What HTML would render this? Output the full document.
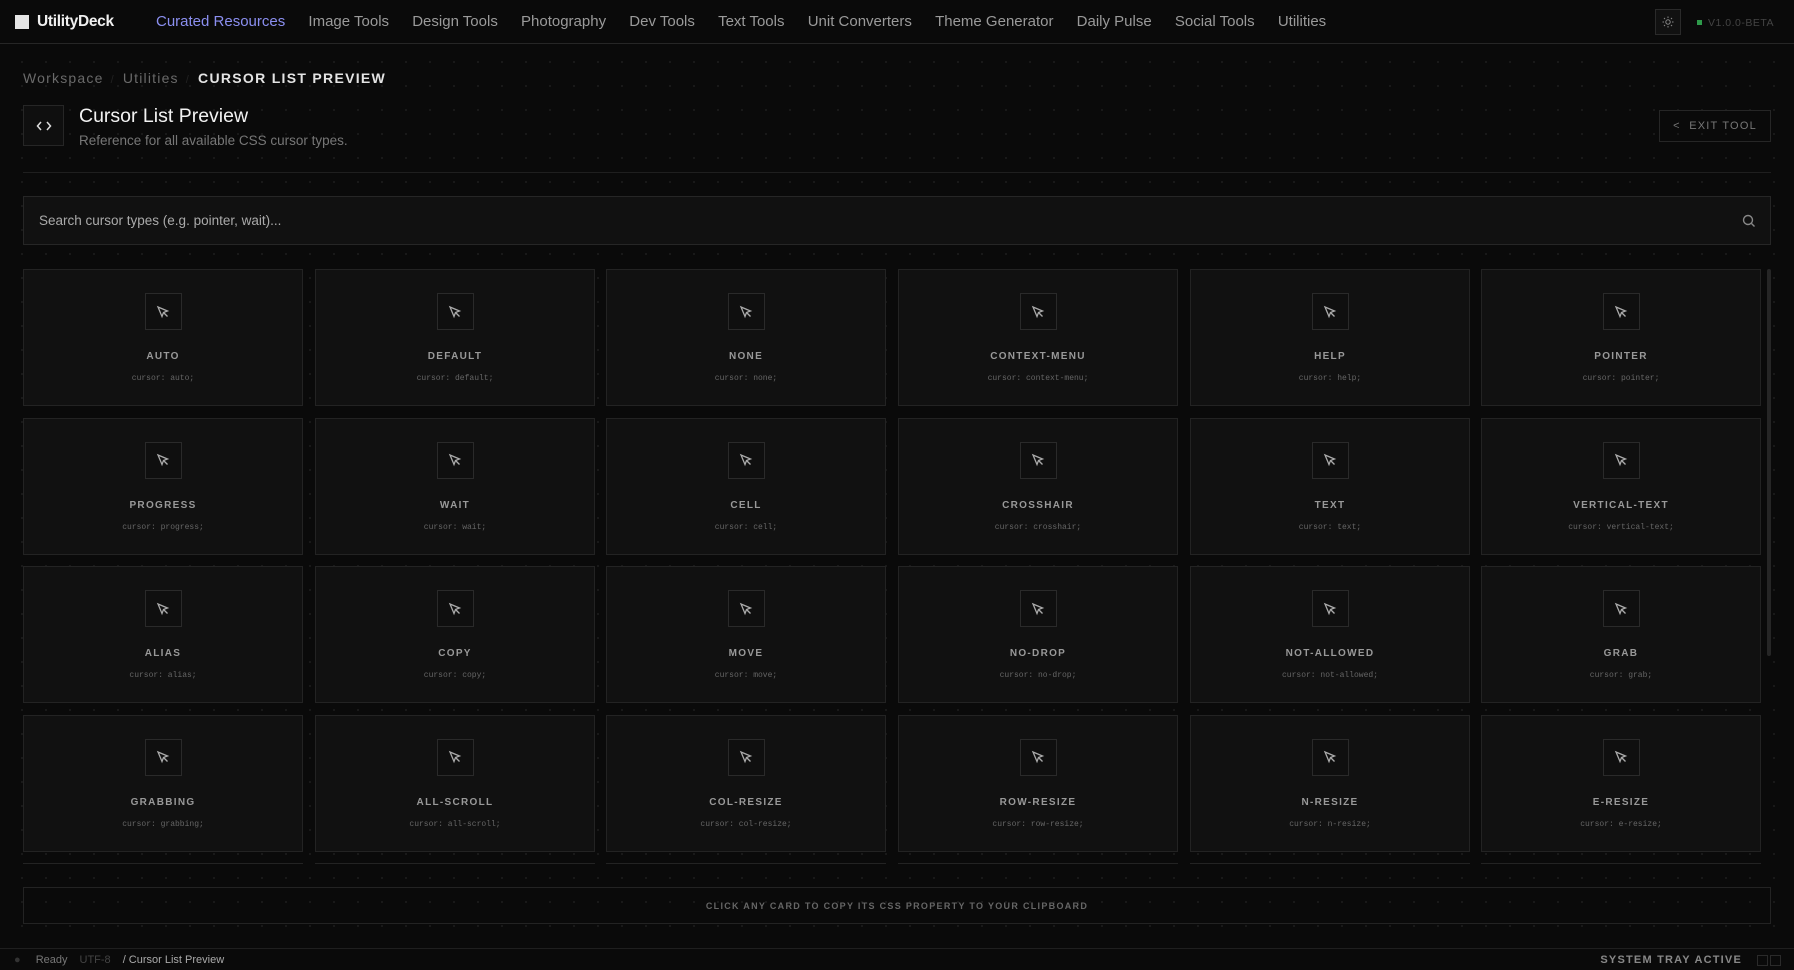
<!DOCTYPE html>
<html><head><meta charset="utf-8"><style>
*{box-sizing:border-box;margin:0;padding:0}
html,body{width:1794px;height:970px;overflow:hidden;background:#0a0a0a;font-family:"Liberation Sans",sans-serif;color:#ddd}
body{background-image:radial-gradient(#1a1a1a 1px,transparent 1.3px);background-size:24px 24px;background-position:10px 50px}
.nav{position:absolute;top:0;left:0;right:0;height:44px;background:#0a0a0a;border-bottom:1px solid #262626;display:flex;align-items:center}
.logo{position:absolute;left:15px;top:15px;width:14px;height:14px;background:#e6e6e6}
.brand{position:absolute;left:37px;top:13px;font-weight:bold;font-size:15.5px;color:#f0f0f0;letter-spacing:-0.3px}
.links{position:absolute;left:156px;top:13px;display:flex;gap:23.2px;font-size:15px;color:#9a9a9a}
.links span:first-child{color:#8b8ff0}
.sun{position:absolute;left:1655px;top:9px;width:26px;height:26px;border:1px solid #2a2a2a;background:#111;display:flex;align-items:center;justify-content:center}
.ver{position:absolute;left:1697px;top:17px;font-size:10.5px;color:#444;letter-spacing:0.5px}
.ver:before{content:"";display:inline-block;width:5px;height:5px;background:#2e9a4a;margin-right:6px;vertical-align:1px}
.bc{position:absolute;left:23px;top:70px;font-size:14px;letter-spacing:1.2px;color:#6a6a6a}
.bc b{color:#e4e4e4;letter-spacing:1.3px}
.bc i{font-style:normal;color:#222;margin:0 8px 0 7px;font-size:11px}
.ib{position:absolute;left:23px;top:105px;width:41px;height:41px;border:1px solid #262626;background:#0f0f0f;display:flex;align-items:center;justify-content:center}
.title{position:absolute;left:79px;top:105px;font-size:19.5px;color:#f2f2f2}
.sub{position:absolute;left:79px;top:133px;font-size:13.5px;color:#777}
.exit{position:absolute;left:1659px;top:110px;width:112px;height:32px;border:1px solid #262626;font-size:11px;letter-spacing:1.2px;color:#777;display:flex;align-items:center;justify-content:center}
.hr{position:absolute;left:23px;right:23px;top:172px;border-top:1px solid #1f1f1f}
.search{position:absolute;left:23px;top:196px;width:1748px;height:49px;border:1px solid #262626;background:#111;font-size:13.5px;color:#aaa;padding:16px 0 0 15px}
.search svg{position:absolute;right:14px;top:17px}
.grid{position:absolute;left:23px;top:269px;width:1740px;height:595px;overflow:hidden}
.card{position:absolute;width:280px;height:137px;background:#111;border:1px solid #232323;text-align:center}
.card .ic{width:37px;height:37px;border:1px solid #2a2a2a;margin:23px auto 0;display:flex;align-items:center;justify-content:center;background:#0f0f0f}
.card .n{margin-top:21px;font-size:10px;font-weight:bold;letter-spacing:1.3px;color:#999}
.card .c{margin-top:12px;font-family:"Liberation Mono",monospace;font-size:8px;color:#666}
.sb{position:absolute;left:1767px;top:269px;width:4px;height:387px;background:#262626;border-radius:2px}
.foot{position:absolute;left:23px;top:887px;width:1748px;height:37px;border:1px solid #232323;font-size:9px;font-weight:bold;letter-spacing:1.3px;color:#666;text-align:center;padding-top:13px}
.status{position:absolute;left:0;right:0;top:948px;height:22px;border-top:1px solid #1f1f1f;background:#0a0a0a;font-size:11px;color:#777}
.status .l{position:absolute;left:14px;top:5px}
.status .l span{margin-right:12px}
.status .r{position:absolute;right:52px;top:5px;font-weight:bold;letter-spacing:1.2px;color:#888}
.sq{position:absolute;top:6px;width:11px;height:11px;border:1px solid #2a2a2a}
</style></head><body>
<div class="nav">
<div class="logo"></div><div class="brand">UtilityDeck</div>
<div class="links"><span>Curated Resources</span><span>Image Tools</span><span>Design Tools</span><span>Photography</span><span>Dev Tools</span><span>Text Tools</span><span>Unit Converters</span><span>Theme Generator</span><span>Daily Pulse</span><span>Social Tools</span><span>Utilities</span></div>
<div class="sun"><svg width="12" height="12" viewBox="0 0 12 12" stroke="#888" fill="none"><circle cx="6" cy="6" r="2.2"/><path d="M6 0.5v1.5M6 10v1.5M0.5 6h1.5M10 6h1.5M2 2l1 1M9 9l1 1M2 10l1-1M9 3l1-1"/></svg></div>
<div class="ver">V1.0.0-BETA</div>
</div>
<div class="bc">Workspace<i>/</i>Utilities<i>/</i><b>CURSOR LIST PREVIEW</b></div>
<div class="ib"><svg width="16" height="12" viewBox="0 0 16 12" stroke="#ddd" stroke-width="1.5" fill="none"><path d="M5 2L1.5 6 5 10M11 2l3.5 4L11 10"/></svg></div>
<div class="title">Cursor List Preview</div>
<div class="sub">Reference for all available CSS cursor types.</div>
<div class="exit">&lt;&nbsp;&nbsp;EXIT TOOL</div>
<div class="hr"></div>
<div class="search">Search cursor types (e.g. pointer, wait)...<svg width="14" height="14" viewBox="0 0 14 14" stroke="#888" stroke-width="1.4" fill="none"><circle cx="6" cy="6" r="4.5"/><path d="M9.5 9.5l3 3"/></svg></div>
<div class="grid" id="g"></div>
<div class="sb"></div>
<div class="foot">CLICK ANY CARD TO COPY ITS CSS PROPERTY TO YOUR CLIPBOARD</div>
<div class="status"><div class="l"><span style="color:#333">●</span> <span>Ready</span><span style="color:#444">UTF-8</span><span style="color:#aaa">/ Cursor List Preview</span></div><div class="r">SYSTEM TRAY ACTIVE</div><div class="sq" style="right:26px"></div><div class="sq" style="right:13px"></div></div>
<script>
var n=["auto","default","none","context-menu","help","pointer","progress","wait","cell","crosshair","text","vertical-text","alias","copy","move","no-drop","not-allowed","grab","grabbing","all-scroll","col-resize","row-resize","n-resize","e-resize","s-resize","w-resize","ne-resize","nw-resize","se-resize","sw-resize"];
var xs=[0,292,583,875,1167,1458],h="";
n.forEach(function(t,i){var r=Math.floor(i/6),c=i%6;h+='<div class="card" style="left:'+xs[c]+'px;top:'+(r*148.5)+'px"><div class="ic"><svg width="14" height="14" viewBox="0 0 14 14" fill="none" stroke="#aaa" stroke-width="1.3"><path d="M2 2l9.5 4-4 1.5-1.5 4z"/><path d="M7.5 7.5l4 4"/></svg></div><div class="n">'+t.toUpperCase()+'</div><div class="c">cursor: '+t+';</div></div>'});
document.getElementById("g").innerHTML=h;
</script>
</body></html>
